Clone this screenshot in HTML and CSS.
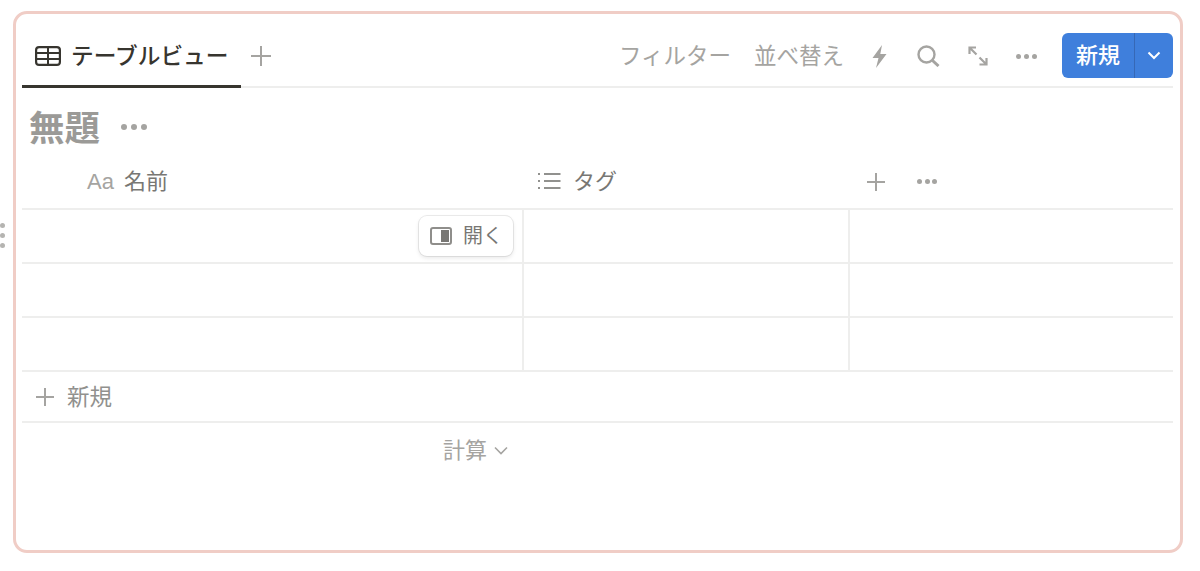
FILE: index.html
```html
<!DOCTYPE html>
<html lang="ja">
<head>
<meta charset="utf-8">
<title>テーブルビュー</title>
<link rel="stylesheet" href="styles.css">
</head>
<body>
<div class="handle"><i></i><i></i><i></i></div>
<main class="frame">
  <header class="tabs">
    <div class="tab">
      <svg class="tab-icon" viewBox="0 0 26 20" width="26" height="20"><rect x="1.1" y="1.1" width="23.8" height="17.8" rx="3" fill="none" stroke="#37352f" stroke-width="2.2"/><path d="M1.5 7H24.5M1.5 13H24.5M13 1.5V18.5" stroke="#37352f" stroke-width="2" fill="none"/></svg>
      <span>テーブルビュー</span>
    </div>
    <svg class="tab-add" viewBox="0 0 20 20" width="20" height="20"><path d="M10 0V20M0 10H20" stroke="#a5a4a1" stroke-width="2"/></svg>
    <div class="tools">
      <span class="tool-text first">フィルター</span>
      <span class="tool-text second">並べ替え</span>
      <svg class="bolt" viewBox="0 0 15 23" width="15" height="23"><path d="M10 0 .5 13H6.5L4 23 14.5 9H8.3Z" fill="#a5a4a1"/></svg>
      <svg class="search" viewBox="0 0 23 22" width="23" height="22"><circle cx="9.5" cy="9.5" r="8" fill="none" stroke="#a5a4a1" stroke-width="2.4"/><path d="M15.5 15.5 21.5 21" stroke="#a5a4a1" stroke-width="3"/></svg>
      <svg class="expand" viewBox="0 0 20 20" width="20" height="20"><path d="M2 2 8.5 8.5M1.5 8V1.5H8M11.5 11.5 18 18M11.5 18.5H18.5V12" fill="none" stroke="#a5a4a1" stroke-width="2.2"/></svg>
      <span class="dots tool-dots"><i></i><i></i><i></i></span>
      <div class="new-btn">
        <span class="new-label">新規</span>
        <span class="new-arrow"><svg viewBox="0 0 14 9" width="14" height="9"><path d="M1.5 1.5 7 7 12.5 1.5" fill="none" stroke="#fff" stroke-width="2"/></svg></span>
      </div>
    </div>
  </header>
  <div class="title-row">
    <h1>無題</h1>
    <span class="dots title-dots"><i></i><i></i><i></i></span>
  </div>
  <div class="table-head">
    <div class="head-name"><span class="aa">Aa</span><span>名前</span></div>
    <div class="head-tag">
      <svg viewBox="0 0 24 18" width="24" height="18"><path d="M7 2H23.5M7 9H23.5M7 16H23.5" stroke="#91918e" stroke-width="2"/><path d="M1 2H3M1 9H3M1 16H3" stroke="#91918e" stroke-width="2"/></svg>
      <span>タグ</span>
    </div>
    <div class="head-add">
      <svg viewBox="0 0 18 18" width="18" height="18"><path d="M9 0V18M0 9H18" stroke="#a5a4a1" stroke-width="2"/></svg>
      <span class="dots head-dots"><i></i><i></i><i></i></span>
    </div>
  </div>
  <div class="row">
    <div class="cell first-cell">
      <div class="open-btn">
        <svg viewBox="0 0 22 18" width="22" height="18"><rect x="1" y="1" width="20" height="16" rx="2" fill="none" stroke="#8f8e8b" stroke-width="2"/><rect x="11" y="3" width="8" height="12" fill="#787774"/></svg>
        <span>開く</span>
      </div>
    </div>
    <div class="cell"></div>
    <div class="cell"></div>
  </div>
  <div class="row"><div class="cell"></div><div class="cell"></div><div class="cell"></div></div>
  <div class="row"><div class="cell"></div><div class="cell"></div><div class="cell"></div></div>
  <div class="add-row">
    <svg viewBox="0 0 18 18" width="18" height="18"><path d="M9 0V18M0 9H18" stroke="#a5a4a1" stroke-width="2"/></svg>
    <span>新規</span>
  </div>
  <div class="calc-row">
    <span>計算</span>
    <svg viewBox="0 0 14 9" width="14" height="9"><path d="M1 1.5 7 7.5 13 1.5" fill="none" stroke="#a5a4a1" stroke-width="1.6"/></svg>
  </div>
</main>
</body>
</html>
```
FILE: styles.css
```css
* { box-sizing: border-box; }
html, body { margin: 0; padding: 0; }
body {
  position: relative;
  width: 1200px;
  height: 571px;
  overflow: hidden;
  background: #fff;
  padding: 11px 17px 18px 13px;
  font-family: "Noto Sans CJK JP", "Liberation Sans", sans-serif;
  color: #37352f;
}
.frame {
  height: 542px;
  border: 3px solid #f0cdc6;
  border-radius: 14px;
  padding: 0 7px 0 6px;
}
.handle {
  position: absolute;
  left: 0;
  top: 223px;
  display: flex;
  flex-direction: column;
  gap: 5px;
}
.handle i { display: block; width: 5px; height: 5px; border-radius: 50%; background: #b5b4b1; }
.dots { display: inline-flex; gap: 3px; }
.dots i { display: block; width: 5px; height: 5px; border-radius: 50%; background: #a5a4a1; }
.tabs {
  height: 74px;
  display: flex;
  align-items: flex-end;
  border-bottom: 2px solid #eeeeed;
}
.tab {
  width: 219px;
  height: 74px;
  margin-bottom: -2px;
  padding: 0 0 14px 13px;
  border-bottom: 3px solid #37352f;
  display: flex;
  align-items: flex-end;
  gap: 10px;
  font-size: 22.7px;
  line-height: 32px;
  font-weight: 500;
  white-space: nowrap;
}
.tab-icon { margin-bottom: 5px; }
.tab-add { margin: 0 0 20px 10px; }
.tools {
  margin-left: auto;
  height: 72px;
  display: flex;
  align-items: center;
  padding-top: 12px;
  color: #a5a4a1;
  font-size: 22.5px;
  white-space: nowrap;
}
.tool-text { line-height: 32px; position: relative; top: -2px; }
.second { margin-left: 23px; }
.bolt { margin-left: 28px; }
.search { margin-left: 30px; }
.expand { margin-left: 28px; }
.tool-dots { margin-left: 28px; }
.new-btn {
  margin: -2px 0 0 25px;
  width: 111px;
  height: 45px;
  border-radius: 6px;
  background: #3f7fdc;
  color: #fff;
  display: flex;
  font-size: 22px;
  font-weight: 500;
}
.new-label { width: 73px; text-align: center; line-height: 41px; border-right: 1px solid #3668b6; }
.new-arrow { flex: 1; display: flex; align-items: center; justify-content: center; }
.title-row { height: 72px; display: flex; align-items: center; padding: 4px 0 0 7px; }
h1 { margin: 0; font-size: 35.5px; line-height: 44px; font-weight: 700; color: #9b9a97; }
.title-dots { margin: 2px 0 0 21px; gap: 4px; }
.title-dots i { width: 6px; height: 6px; }
.table-head {
  height: 50px;
  display: grid;
  grid-template-columns: 502px 326px 1fr;
  align-items: center;
  border-bottom: 2px solid #eeeeed;
  font-size: 22px;
  line-height: 32px;
  color: #787774;
  padding-bottom: 11px;
}
.head-name { display: flex; align-items: center; gap: 10px; padding-left: 65px; }
.aa { color: #a5a4a1; font-family: "Liberation Sans", sans-serif; font-size: 22px; position: relative; top: 3px; }
.head-tag { display: flex; align-items: center; gap: 12px; padding-left: 13px; }
.head-tag svg { position: relative; top: 2px; }
.head-add { display: flex; align-items: center; padding-left: 17px; }
.head-dots { margin-left: 32px; gap: 2.5px; }
.head-dots, .head-add svg { position: relative; top: 3px; }
.row {
  height: 54px;
  display: grid;
  grid-template-columns: 502px 326px 1fr;
  border-bottom: 2px solid #eeeeed;
}
.cell { border-right: 2px solid #eeeeed; }
.cell:last-child { border-right: 0; }
.first-cell { display: flex; justify-content: flex-end; align-items: center; padding-right: 9px; }
.open-btn {
  width: 94px;
  height: 40px;
  border-radius: 8px;
  background: #fff;
  box-shadow: 0 0 0 1px rgba(15,15,15,.08), 0 2px 4px rgba(15,15,15,.1);
  display: flex;
  align-items: center;
  gap: 11px;
  padding-left: 11px;
  font-size: 20px;
  line-height: 28px;
  color: #787774;
}
.open-btn span { position: relative; top: -1px; }
.add-row {
  height: 51px;
  display: flex;
  align-items: center;
  gap: 13px;
  padding-left: 14px;
  border-bottom: 2px solid #eeeeed;
  font-size: 22.5px;
  line-height: 32px;
  color: #91918e;
}
.add-row span { position: relative; top: -2px; }
.calc-row {
  height: 54px;
  display: flex;
  align-items: center;
  gap: 7px;
  padding-left: 421px;
  font-size: 22px;
  line-height: 32px;
  color: #a5a4a1;
}
.calc-row span { position: relative; top: -2px; }
```
